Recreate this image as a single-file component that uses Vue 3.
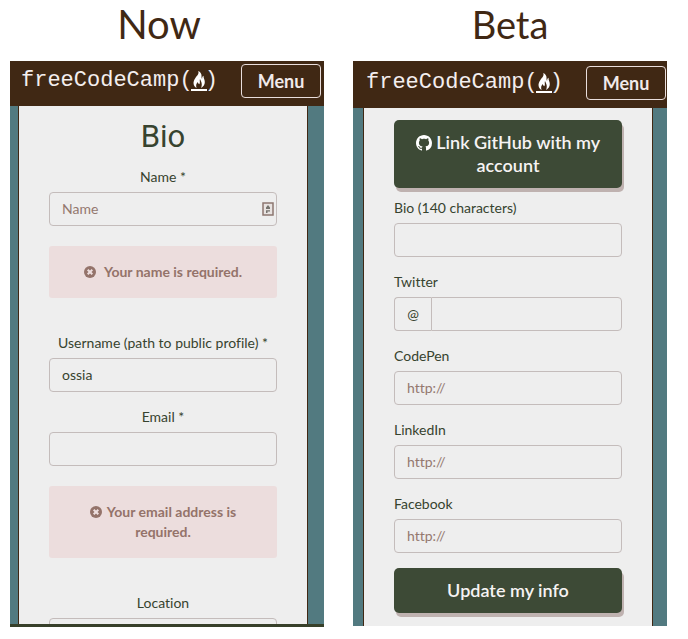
<script setup>
import { ref } from 'vue'

const name = ref('')
const username = ref('ossia')
const email = ref('')
const place = ref('')
const bio = ref('')
const twitter = ref('')
const links = ref([
  { id: 'codepen', label: 'CodePen', value: '' },
  { id: 'linkedin', label: 'LinkedIn', value: '' },
  { id: 'facebook', label: 'Facebook', value: '' }
])
</script>

<template>
  <main class="page">
    <section class="column">
      <h1 class="title title-now">Now</h1>
      <div class="phone phone-now">
        <header class="navbar">
          <a class="brand" href="#">freeCodeCamp(<svg class="flame" viewBox="0 0 16 20" aria-hidden="true"><path d="M7.2 0C8.6 3 5.2 5.3 3.6 8.2C1.8 11.4 2.2 14.8 5.6 17C4.6 14.3 5.3 12.6 6.8 11C7 12.3 7.5 12.8 8.3 13.2C9.6 11.4 8.2 9.8 9 8C10.2 10.6 11.8 13.2 10 17C13.4 15.3 14.6 12 13.3 8.6C12.9 7.3 12.4 6.3 12.6 4.8C11.4 5.5 11 6.6 11.1 8C10 6.8 10.9 4.9 10.3 3.2C9.8 1.7 8.7.6 7.2 0ZM0 18H16V20H0Z" /></svg>)</a>
          <button class="menu" type="button">Menu</button>
        </header>
        <form class="sheet centered" @submit.prevent>
          <h2 class="heading">Bio</h2>
          <div class="field">
            <label for="name">Name *</label>
            <div class="input-wrap">
              <input id="name" v-model="name" type="text" placeholder="Name">
              <svg class="key" viewBox="0 0 12 14" aria-hidden="true"><rect x="1" y="1" width="10" height="12" fill="#e8e3e1" stroke="#8d7770" stroke-width="1.5" /><path d="M6 3L8 5.5V7H4V5.5ZM4 8.2H8V9.4H5.5V11H4Z" fill="#75736d" /></svg>
            </div>
          </div>
          <p class="alert" role="alert">
            <svg class="cross wide" viewBox="0 0 12 12" aria-hidden="true"><circle cx="6" cy="6" r="6" fill="#94736a" /><path d="M3.7 3.7L8.3 8.3M8.3 3.7L3.7 8.3" stroke="#eedfdf" stroke-width="2" /></svg>Your name is required.
          </p>
          <div class="field">
            <label for="username">Username (path to public profile) *</label>
            <input id="username" v-model="username" type="text">
          </div>
          <div class="field">
            <label for="email">Email *</label>
            <input id="email" v-model="email" type="email">
          </div>
          <p class="alert" role="alert">
            <svg class="cross" viewBox="0 0 12 12" aria-hidden="true"><circle cx="6" cy="6" r="6" fill="#94736a" /><path d="M3.7 3.7L8.3 8.3M8.3 3.7L3.7 8.3" stroke="#eedfdf" stroke-width="2" /></svg>Your email address is required.
          </p>
          <div class="field">
            <label for="location">Location</label>
            <input id="location" v-model="place" type="text">
          </div>
        </form>
      </div>
    </section>

    <section class="column">
      <h1 class="title title-beta">Beta</h1>
      <div class="phone phone-beta">
        <header class="navbar">
          <a class="brand" href="#">freeCodeCamp(<svg class="flame" viewBox="0 0 16 20" aria-hidden="true"><path d="M7.2 0C8.6 3 5.2 5.3 3.6 8.2C1.8 11.4 2.2 14.8 5.6 17C4.6 14.3 5.3 12.6 6.8 11C7 12.3 7.5 12.8 8.3 13.2C9.6 11.4 8.2 9.8 9 8C10.2 10.6 11.8 13.2 10 17C13.4 15.3 14.6 12 13.3 8.6C12.9 7.3 12.4 6.3 12.6 4.8C11.4 5.5 11 6.6 11.1 8C10 6.8 10.9 4.9 10.3 3.2C9.8 1.7 8.7.6 7.2 0ZM0 18H16V20H0Z" /></svg>)</a>
          <button class="menu" type="button">Menu</button>
        </header>
        <form class="sheet" @submit.prevent>
          <button class="action" type="button"><svg class="github" viewBox="0 0 16 16" aria-hidden="true"><path d="M8 0C3.58 0 0 3.58 0 8c0 3.54 2.29 6.53 5.47 7.59.4.07.55-.17.55-.38 0-.19-.01-.82-.01-1.49-2.01.37-2.53-.49-2.69-.94-.09-.23-.48-.94-.82-1.13-.28-.15-.68-.52-.01-.53.63-.01 1.08.58 1.23.82.72 1.21 1.87.87 2.33.66.07-.52.28-.87.51-1.07-1.78-.2-3.64-.89-3.64-3.95 0-.87.31-1.59.82-2.15-.08-.2-.36-1.02.08-2.12 0 0 .67-.21 2.2.82.64-.18 1.32-.27 2-.27s1.36.09 2 .27c1.53-1.04 2.2-.82 2.2-.82.44 1.1.16 1.92.08 2.12.51.56.82 1.27.82 2.15 0 3.07-1.87 3.75-3.65 3.95.29.25.54.73.54 1.48 0 1.07-.01 1.93-.01 2.2 0 .21.15.46.55.38A8.01 8.01 0 0 0 16 8c0-4.42-3.58-8-8-8z" /></svg> Link GitHub with my account</button>
          <div class="field">
            <label for="bio">Bio (140 characters)</label>
            <input id="bio" v-model="bio" type="text" maxlength="140">
          </div>
          <div class="field">
            <label for="twitter">Twitter</label>
            <div class="group">
              <span class="addon">@</span>
              <input id="twitter" v-model="twitter" type="text">
            </div>
          </div>
          <div v-for="link in links" :key="link.id" class="field">
            <label :for="link.id">{{ link.label }}</label>
            <input :id="link.id" v-model="link.value" type="url" placeholder="http://">
          </div>
          <button class="action" type="submit">Update my info</button>
        </form>
      </div>
    </section>
  </main>
</template>

<style>
body {
  background: #fff;
}
</style>

<style scoped>
.page {
  box-sizing: border-box;
  display: grid;
  grid-template-columns: 1fr 1fr;
  grid-template-rows: minmax(0, 1fr);
  gap: 29px;
  height: 100vh;
  padding: 0 21px 12px 10px;
  font: 14px/20px Lato, sans-serif;
  font-variant-ligatures: none;
  color: #37432f;
}

.column {
  display: flex;
  flex-direction: column;
  min-width: 0;
  min-height: 0;
}

.title {
  flex: none;
  margin: 0;
  height: 61px;
  font-size: 40px;
  font-weight: 400;
  line-height: 48px;
  text-align: center;
  color: #402814;
}

.title-now {
  padding-right: 16px;
}

.title-beta {
  font-size: 38px;
}

.phone {
  background: #527a80;
  overflow: hidden;
}

.phone-now {
  border-bottom: 3px solid #37402a;
}

.navbar {
  display: flex;
  justify-content: space-between;
  align-items: center;
  padding: 3px 3px 8px 11px;
  background: #402814;
}

.phone-beta .navbar {
  padding: 5px 1px 8px 13px;
}

.brand {
  display: flex;
  align-items: center;
  font: 22px/34px "Liberation Mono", monospace;
  color: #f4eeee;
  text-decoration: none;
}

.flame {
  width: 16px;
  height: 20px;
  margin: 0 -2px;
  fill: #fff;
}

.menu {
  height: 34px;
  width: 80px;
  padding: 0;
  border: 1px solid #e9dddb;
  border-radius: 4px;
  background: transparent;
  color: #f1eaea;
  font: 700 18px/24px Lato, sans-serif;
}

.sheet {
  margin: 0 16px 0 8px;
  padding: 0 30px 13px;
  border: solid #402814;
  border-width: 0 1px;
  background: #eee;
}

.phone-beta .sheet {
  margin: 0 14px 0 10px;
  padding-top: 12px;
}

.centered {
  text-align: center;
}

.heading {
  margin: 0;
  padding: 9px 0 8px;
  font: 400 31px/44px Roboto, sans-serif;
}

.field {
  margin-bottom: 15px;
}

label {
  display: block;
  margin-bottom: 5px;
}

input {
  box-sizing: border-box;
  display: block;
  width: 100%;
  height: 34px;
  padding: 5px 12px 7px;
  border: 1px solid #c4bcbb;
  border-radius: 4px;
  background: #eee;
  color: #37432f;
  font: 14px/20px Lato, sans-serif;
  font-variant-ligatures: none;
}

input::placeholder {
  color: #94786f;
  opacity: 1;
}

.input-wrap {
  position: relative;
}

.key {
  position: absolute;
  top: 10px;
  right: 3px;
  width: 12px;
  height: 14px;
}

.alert {
  margin: 20px 0 35px;
  padding: 16px;
  border-radius: 3px;
  background: #ecdddd;
  color: #94736a;
  font-weight: 700;
}

.cross {
  width: 12px;
  height: 12px;
  margin-right: 5px;
  vertical-align: -1px;
}

.cross.wide {
  margin-right: 8px;
}

.group {
  display: flex;
}

.addon {
  box-sizing: border-box;
  flex: none;
  width: 37px;
  padding: 6px 0;
  border: 1px solid #c4bcbb;
  border-right: 0;
  border-radius: 4px 0 0 4px;
  text-align: center;
}

.group input {
  flex: 1;
  min-width: 0;
  border-radius: 0 4px 4px 0;
}

.action {
  display: block;
  width: 100%;
  margin: 0 0 10px;
  padding: 11px 16px;
  border: 0;
  border-radius: 5px;
  background: #3d4a36;
  box-shadow: 2px 4px 0 #bfb2b0;
  color: #f6f3f3;
  font: 600 18px/23px Lato, sans-serif;
}

.action[type="submit"] {
  margin: 0;
}

.github {
  width: 16px;
  height: 16px;
  fill: #fff;
  vertical-align: -2px;
}
</style>
